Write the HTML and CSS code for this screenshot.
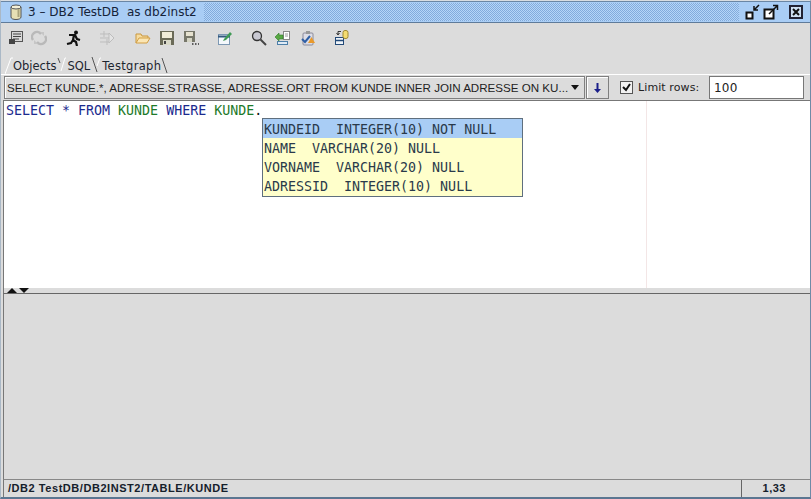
FILE: index.html
```html
<!DOCTYPE html>
<html>
<head>
<meta charset="utf-8">
<title>DB2 TestDB</title>
<link rel="stylesheet" href="styles.css">
</head>
<body>
<div class="window">
  <header class="titlebar">
    <svg class="dbicon" width="12" height="16" viewBox="0 0 12 16"><path d="M1 3v10c0 1.5 2 2.5 5 2.5s5-1 5-2.5V3z" fill="#e6dfb4" stroke="#555"/><ellipse cx="6" cy="3" rx="5" ry="2" fill="#f3f0d8" stroke="#555"/><path d="M8.500 5v8" stroke="#a9a27a" stroke-width="2"/></svg>
    <span class="title">3 – DB2 TestDB&nbsp; as db2inst2</span>
    <span class="dots"></span>
    <span class="winbtns">
      <svg width="16" height="16" viewBox="0 0 16 16"><rect x="1.500" y="8.500" width="6" height="6" fill="#fff" stroke="#111" stroke-width="2"/><path d="M14 1 9 6M9 2v4h4" fill="none" stroke="#111" stroke-width="1.500"/></svg>
      <svg width="16" height="16" viewBox="0 0 16 16"><rect x="1.500" y="5.500" width="9" height="9" fill="#fff" stroke="#111" stroke-width="2"/><path d="M6 10l8-8M10 1.500h4.500V6" fill="none" stroke="#111" stroke-width="1.500"/></svg>
      <svg class="closebtn" width="14" height="14" viewBox="0 0 14 14"><rect x="1" y="1" width="12" height="12" fill="#cfe0f2" stroke="#223" stroke-width="2"/><path d="M4 4l6 6M10 4l-6 6" stroke="#111" stroke-width="2"/></svg>
    </span>
  </header>

  <div class="toolbar">
    <svg class="i w16" viewBox="0 0 16 16"><rect x="3.500" y="1.500" width="11" height="10" fill="#d8d8d8" stroke="#555"/><path d="M5 4h8M5 6.500h8M5 9h6" stroke="#444"/><rect x="1" y="9" width="6" height="5" fill="#444"/></svg>
    <svg class="i w16 g1" viewBox="0 0 16 16"><path d="M2 10a5 5 0 0 1 8-6M14 6a5 5 0 0 1-8 6" fill="none" stroke="#b9b9b9" stroke-width="2.500"/><path d="M9 2h4v4zM7 14H3v-4z" fill="#c6c6c6"/></svg>
    <svg class="i w16 g2" viewBox="0 0 16 16"><circle cx="10" cy="2.500" r="2" fill="#111"/><path d="M3 5h6l2 4 3 1M8 5 7 10l3 2 1 4M7 10l-2 3-4 1" fill="none" stroke="#111" stroke-width="2.200"/></svg>
    <svg class="i w16 g3" viewBox="0 0 16 16"><path d="M1 4h9M1 8h9M1 12h9M5 1v6M8 9v6" stroke="#bdbdbd"/><path d="M10 3l5 5-5 5z" fill="#e4e4e4" stroke="#bdbdbd"/></svg>
    <svg class="i w16 g4" viewBox="0 0 16 16"><path d="M1 13V4h5l1 2h6v2" fill="#f6dca0" stroke="#c9973f"/><path d="M1 13l3-5h11l-3 5z" fill="#fbe6b4" stroke="#d29f45"/></svg>
    <svg class="i w16 g5" viewBox="0 0 16 16"><rect x="1" y="1" width="14" height="14" fill="#6b6b58"/><rect x="3" y="2" width="10" height="6" fill="#f0ecd8"/><rect x="4" y="10" width="8" height="5" fill="#d9d9c8"/><rect x="5" y="11" width="2" height="3" fill="#444"/></svg>
    <svg class="i w16 g6" viewBox="0 0 16 16"><rect x="1" y="1" width="11" height="11" fill="#77776a"/><rect x="3" y="2" width="7" height="4" fill="#e6e2d0"/><rect x="4" y="8" width="5" height="4" fill="#d4d4c4"/><path d="M9 14h1.500M12 14h1.500M15 14h1" stroke="#333" stroke-width="1.500"/></svg>
    <svg class="i w16 g7" viewBox="0 0 16 16"><rect x="1.500" y="4.500" width="11" height="10" fill="#f4f8fc" stroke="#7d98b3"/><path d="M1 6.500h12" stroke="#33597f" stroke-width="2"/><path d="M7 9l6-7 2 2-6 6-3 1z" fill="#3f9a55"/></svg>
    <svg class="i w16 g8" viewBox="0 0 16 16"><circle cx="6" cy="6" r="4.500" fill="#c8c8d2" stroke="#333" stroke-width="1.300"/><path d="M9.500 9.500 15 15" stroke="#444" stroke-width="2"/></svg>
    <svg class="i w16 g9" viewBox="0 0 16 16"><rect x="9.500" y="1.500" width="6" height="8" fill="#fff" stroke="#888"/><path d="M11 4h3M11 6h3" stroke="#999"/><path d="M1 7l4-4v2h4v4H5v2z" fill="#58a843" stroke="#2f7a2a" stroke-width=".6"/><rect x="3.500" y="11.500" width="10" height="3" fill="#dfeaf5" stroke="#4d7fa8"/></svg>
    <svg class="i w16 g10" viewBox="0 0 16 16"><rect x="3" y="3" width="10" height="12" rx="1" fill="#dcdde6" stroke="#8a8a9a"/><rect x="6" y="1" width="4" height="3" fill="#999"/><path d="M2 9l3 3 5-6" fill="none" stroke="#2f5fa5" stroke-width="2"/><path d="M11.500 7l3.500 6h-7z" fill="#e99a2c"/></svg>
    <svg class="i w16 g11" viewBox="0 0 16 16"><rect x="2.500" y="7.500" width="8" height="7" fill="#eef3f8" stroke="#234a78"/><path d="M2 10.500h9" stroke="#234a78" stroke-width="1.500"/><path d="M8 1.500H5v3M3.500 3 5 5 6.500 3" fill="none" stroke="#333"/><rect x="10" y=".5" width="5" height="8" rx="2" fill="#f4dc70" stroke="#a08a30"/></svg>
  </div>

  <nav class="tabs">
    <svg class="sl s1" width="8" height="17" viewBox="0 0 8 17"><path d="M0 17 6 1h2" fill="none" stroke="#fff"/></svg>
    <span class="tab">Objects</span>
    <svg class="sl s2" width="9" height="17" viewBox="0 0 9 17"><path d="M1 1l2 5" fill="none" stroke="#555"/><path d="M4 14 8 1h1" fill="none" stroke="#fff"/></svg>
    <span class="tab">SQL</span>
    <svg class="sl s3" width="10" height="17" viewBox="0 0 10 17"><path d="M1 0l5 15" fill="none" stroke="#555"/><path d="M6 9l3-8h1" fill="none" stroke="#fff"/></svg>
    <span class="tab wide">Testgraph</span>
    <svg class="sl s4" width="9" height="17" viewBox="0 0 9 17"><path d="M1 1l5 15" fill="none" stroke="#555"/></svg>
  </nav>

  <div class="queryrow">
    <div class="combo">
      <span class="combotext">SELECT KUNDE.*, ADRESSE.STRASSE, ADRESSE.ORT FROM KUNDE INNER JOIN ADRESSE ON KU...</span>
      <span class="caret"></span>
    </div>
    <button class="down"><svg width="9" height="12" viewBox="0 0 9 12"><path d="M4.500 1v8" stroke="#1a1f8a" stroke-width="2"/><path d="M1 7h7l-3.500 4z" fill="#1a1f8a"/></svg></button>
    <span class="check"><svg width="9" height="9" viewBox="0 0 9 9"><path d="M1 4l3 3 4-6" fill="none" stroke="#111" stroke-width="2"/></svg></span>
    <span class="limit">Limit rows:</span>
    <span class="rows">100</span>
  </div>

  <main class="editor">
    <div class="code"><span class="kw">SELECT * FROM</span> <span class="tb">KUNDE</span> <span class="kw">WHERE</span> <span class="tb">KUNDE</span><span class="dot">.</span></div>
    <span class="margin"></span>
    <ul class="popup">
      <li class="sel">KUNDEID&nbsp; INTEGER(10) NOT NULL</li>
      <li>NAME&nbsp; VARCHAR(20) NULL</li>
      <li>VORNAME&nbsp; VARCHAR(20) NULL</li>
      <li>ADRESSID&nbsp; INTEGER(10) NULL</li>
    </ul>
  </main>

  <div class="splitter"><span class="up"></span><span class="dn"></span></div>
  <section class="lower"></section>

  <footer class="status">
    <span class="path">/DB2 TestDB/DB2INST2/TABLE/KUNDE</span>
    <span class="pos">1,33</span>
  </footer>
</div>
</body>
</html>
```
FILE: styles.css
```css
html, body {
  margin: 0;
  padding: 0;
  overflow: hidden;
}
.window {
  width: 811px;
  height: 499px;
  box-sizing: border-box;
  background: #dcdcdc;
  border-top: 1px solid #d8dde2;
  border-bottom: 2px solid #5b7691;
  border-right: 1px solid #6f8aa6;
  border-left: 1px solid #aab8c6;
  display: flex;
  flex-direction: column;
  font-family: "DejaVu Sans", sans-serif;
  color: #111;
}
.titlebar {
  height: 22px;
  flex: none;
  box-sizing: border-box;
  background: #a9cdf5;
  border-bottom: 1px solid #5f7b9a;
  border-top: 1px solid #6a86a4;
  display: flex;
  align-items: center;
  padding-left: 9px;
}
.dbicon { flex: none; }
.title {
  margin-left: 6px;
  font-size: 12px;
  color: #15233a;
  white-space: nowrap;
}
.dots {
  flex: 1;
  align-self: stretch;
  margin: 1px 0 1px 7px;
  background: conic-gradient(#82abdc 25%, #b5d5f8 0 50%, #82abdc 0 75%, #b5d5f8 0) 0 0 / 2px 2px;
}
.winbtns {
  flex: none;
  display: flex;
  align-items: center;
  width: 71px;
  padding-left: 6px;
  box-sizing: border-box;
  gap: 2px;
}
.closebtn { margin-left: 8px; }
.toolbar {
  height: 30px;
  flex: none;
  display: flex;
  align-items: center;
  padding-left: 7px;
  box-sizing: border-box;
}
.i { width: 16px; height: 16px; flex: none; }
.g1 { margin-left: 7px; }
.g2 { margin-left: 19px; }
.g3 { margin-left: 17px; }
.g4 { margin-left: 20px; }
.g5 { margin-left: 8px; }
.g6 { margin-left: 8px; }
.g7 { margin-left: 18px; }
.g8 { margin-left: 18px; }
.g9 { margin-left: 7px; }
.g10 { margin-left: 10px; }
.g11 { margin-left: 17px; }
.tabs {
  height: 22px;
  flex: none;
  display: flex;
  align-items: center;
  padding: 4px 0 0 4px;
  box-sizing: border-box;
  border-bottom: 1px solid #fff;
  font-size: 11.500px;
}
.sl { flex: none; }
.s2 { margin: 0 1px; }
.s3 { margin: 0 1px; }
.tab { color: #1c2530; }
.tab.wide { letter-spacing: .3px; }
.queryrow {
  height: 25px;
  flex: none;
  display: flex;
  align-items: center;
  padding: 0 6px 0 3px;
  box-sizing: border-box;
}
.combo {
  width: 581px;
  height: 23px;
  flex: none;
  box-sizing: border-box;
  border: 1px solid #7f7f7f;
  box-shadow: inset 1px 1px 0 #fff;
  display: flex;
  align-items: center;
  padding: 0 5px 0 2px;
  justify-content: space-between;
}
.combotext {
  font-family: "Liberation Sans", sans-serif;
  font-size: 11.600px;
  white-space: nowrap;
  color: #222;
}
.caret {
  border-left: 4px solid transparent;
  border-right: 4px solid transparent;
  border-top: 5px solid #111;
}
.down {
  width: 23px;
  height: 23px;
  flex: none;
  margin-left: 1px;
  padding: 0;
  background: #dcdcdc;
  border: 1px solid #7f7f7f;
  box-shadow: inset 1px 1px 0 #fff;
  display: flex;
  align-items: center;
  justify-content: center;
}
.check {
  width: 11px;
  height: 11px;
  flex: none;
  margin-left: 11px;
  background: #f2f2f2;
  border: 1px solid #555;
  display: flex;
  align-items: center;
  justify-content: center;
}
.limit {
  margin-left: 5px;
  font-size: 11px;
  letter-spacing: .1px;
  color: #222;
  white-space: nowrap;
}
.rows {
  margin-left: auto;
  width: 95px;
  height: 23px;
  box-sizing: border-box;
  background: #fff;
  border: 1px solid #777;
  font-size: 12px;
  line-height: 22px;
  padding-left: 4px;
  letter-spacing: .2px;
  color: #222;
}
.editor {
  position: relative;
  height: 188px;
  flex: none;
  margin-left: 2px;
  background: #fff;
  border-left: 1px solid #777;
  border-top: 1px solid #777;
  box-sizing: border-box;
}
.code {
  padding: 2px 0 0 2px;
  font-family: "DejaVu Sans Mono", monospace;
  font-size: 13.300px;
  line-height: 16px;
  white-space: pre;
}
.kw { color: #1b2a8e; }
.tb { color: #1d7a2a; }
.dot { color: #111; }
.margin {
  position: absolute;
  left: 642px;
  top: 0;
  bottom: 0;
  border-left: 1px solid #f3e6e6;
}
.popup {
  position: absolute;
  left: 258px;
  top: 17px;
  width: 261px;
  margin: 0;
  padding: 0 0 1px;
  list-style: none;
  box-sizing: border-box;
  background: #ffffcb;
  border: 1px solid #5f6f7e;
  font-family: "DejaVu Sans Mono", monospace;
  font-size: 13.300px;
  color: #2a3a4a;
}
.popup li {
  height: 19px;
  box-sizing: border-box;
  line-height: 19px;
  padding: 1px 0 0 1px;
  white-space: pre;
}
.popup li.sel { background: #a9cdf5; }
.splitter {
  height: 6px;
  flex: none;
  margin-left: 2px;
  display: flex;
  align-items: flex-end;
  padding-left: 3px;
  gap: 2px;
  box-sizing: border-box;
  border-bottom: 1px solid #666;
  border-left: 1px solid #777;
}
.up {
  border-left: 5px solid transparent;
  border-right: 5px solid transparent;
  border-bottom: 5px solid #111;
}
.dn {
  border-left: 5px solid transparent;
  border-right: 5px solid transparent;
  border-top: 5px solid #111;
}
.lower {
  flex: 1;
  margin-left: 2px;
  background: #dcdcdc;
  border-left: 1px solid #777;
}
.status {
  height: 18px;
  flex: none;
  display: flex;
  box-sizing: border-box;
  margin-left: 2px;
  border-top: 1px solid #888;
  border-left: 1px solid #777;
  font-family: "Liberation Sans", sans-serif;
  font-size: 11px;
  font-weight: bold;
  line-height: 16px;
  color: #15202b;
}
.path {
  flex: 1;
  padding-left: 4px;
  letter-spacing: .55px;
}
.pos {
  width: 69px;
  flex: none;
  box-sizing: border-box;
  padding-right: 24px;
  text-align: right;
  letter-spacing: .5px;
  border-left: 1px solid #666;
}
```
